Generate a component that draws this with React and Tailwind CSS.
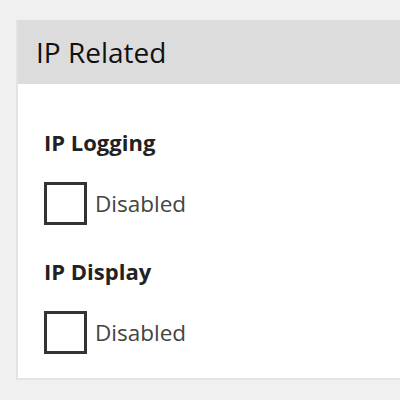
import React from "react";

function Option({ label }) {
  return (
    <div>
      <h3 className="text-[22px] font-bold text-[#222] leading-[28px]">{label}</h3>
      <label className="mt-[26px] flex items-center gap-[8px]">
        <span className="block w-[43px] h-[43px] border-[3px] border-[#333] bg-white" />
        <span className="text-[22.5px] text-[#444] leading-[30px]">Disabled</span>
      </label>
    </div>
  );
}

export default function App() {
  return (
    <div
      className="min-h-[400px] bg-[#f0f0f0] pt-[20px] pl-[16px]"
      style={{ fontFamily: '"Open Sans", "Noto Sans", sans-serif' }}
    >
      <div className="bg-white border-l-2 border-b-2 border-[#e3e3e3] w-[400px]">
        <div className="bg-[#dcdcdc] h-[64px] flex items-center pl-[18px]">
          <h2 className="text-[28px] text-[#111] leading-none">IP Related</h2>
        </div>
        <div className="pl-[26px] pt-[44px] pb-[24px] flex flex-col gap-[32px]">
          <Option label="IP Logging" />
          <Option label="IP Display" />
        </div>
      </div>
    </div>
  );
}
